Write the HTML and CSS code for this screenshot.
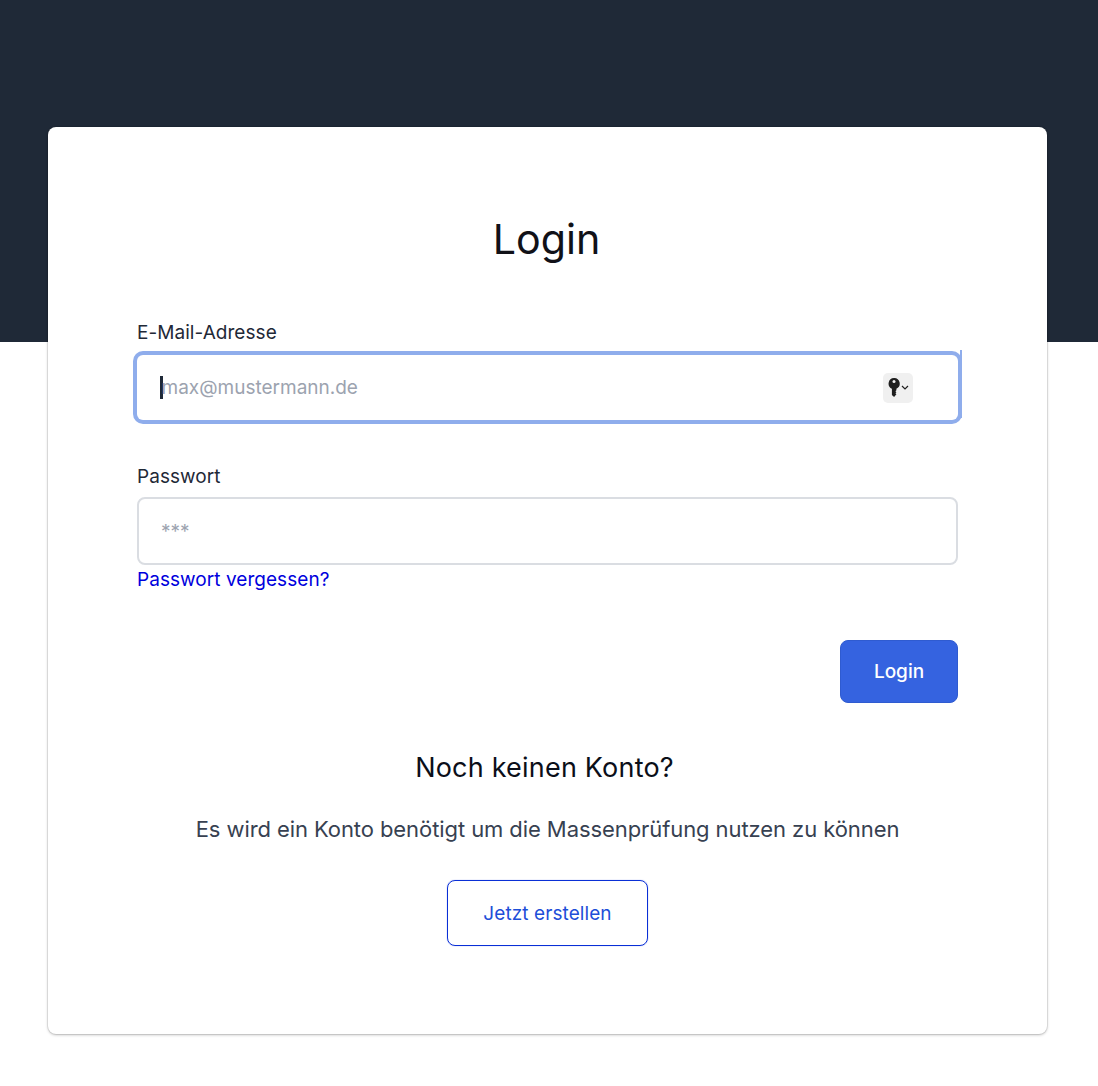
FILE: index.html
```html
<!DOCTYPE html>
<html lang="de">
<head>
<meta charset="utf-8">
<title>Login</title>
<link rel="stylesheet" href="styles.css">
</head>
<body>
<main class="page">
  <section class="card">
    <h1 class="title">Login</h1>
    <form class="form">
      <div class="field field-email">
        <label class="label" for="email">E-Mail-Adresse</label>
        <div class="input focused" id="email">
          <span class="caret"></span>
          <span class="placeholder">max@mustermann.de</span>
          <span class="key-badge">
            <svg class="key-icon" viewBox="0 0 12 20" width="12" height="20" aria-hidden="true">
              <path fill="#1f1f1f" d="M6 0a5.6 5.6 0 0 1 2.4 10.7v1.5l-1 1 1 1-1 1 1 1.1-2.3 2.7-2.2-2V10.700A5.600 5.600 0 0 1 6 0Z"/>
              <circle cx="6" cy="3.600" r="1.500" fill="#f0f0f0"/>
            </svg>
            <svg class="chev-icon" viewBox="0 0 8 5" width="8" height="5" aria-hidden="true">
              <path d="M1 1l3 3 3-3" fill="none" stroke="#1f1f1f" stroke-width="1.2"/>
            </svg>
          </span>
        </div>
      </div>
      <div class="field field-password">
        <label class="label" for="password">Passwort</label>
        <div class="input" id="password">
          <span class="placeholder">***</span>
        </div>
        <a class="forgot" href="#">Passwort vergessen?</a>
      </div>
      <div class="actions">
        <button class="btn-primary" type="button">Login</button>
      </div>
    </form>
    <div class="signup">
      <h2 class="signup-title">Noch keinen Konto?</h2>
      <p class="signup-text">Es wird ein Konto benötigt um die Massenprüfung nutzen zu können</p>
      <a class="btn-outline" href="#">Jetzt erstellen</a>
    </div>
  </section>
</main>
</body>
</html>
```
FILE: styles.css
```css
* { box-sizing: border-box; }

html, body { margin: 0; padding: 0; }

body {
  font-family: Inter, "Liberation Sans", sans-serif;
  background: #fff;
  color: #111827;
}

.page {
  min-height: 1086px;
  padding: 127px 51px 52px 48px;
  background: linear-gradient(#1f2937 342px, #fff 342px);
}

.card {
  height: 907px;
  padding: 84px 89px 0;
  background: #fff;
  border-radius: 8px;
  box-shadow: 0 0 0 1px rgba(0, 0, 0, 0.07), 0 1px 3px rgba(0, 0, 0, 0.25);
}

.title {
  margin: 0;
  padding-right: 2px;
  font-size: 41.2px;
  line-height: 56px;
  font-weight: 400;
  text-align: center;
  color: #111118;
}

.form { margin-top: 52px; }

.label {
  display: block;
  font-size: 19px;
  line-height: 28px;
  letter-spacing: 0.05px;
  color: #1f2937;
}

.field-password { margin-top: 43px; }

.input {
  display: flex;
  align-items: center;
  height: 68px;
  margin-top: 6px;
  padding: 0 22px;
  border: 2px solid #dadde2;
  border-radius: 8px;
  background: #fff;
  font-size: 19px;
}

.input.focused {
  position: relative;
  height: 65px;
  margin-top: 8px;
  padding: 0 45px 0 23px;
  border: 0;
  border-radius: 6px;
  box-shadow: 0 0 0 4px #8fadec;
}

.input.focused::after {
  content: "";
  position: absolute;
  top: -5px;
  bottom: 2px;
  right: -4px;
  width: 2px;
  background: #8fadec;
}

.placeholder { color: #9ca3af; }

.caret {
  flex: none;
  width: 2.5px;
  height: 23px;
  margin-right: -1px;
  background: #1f2937;
}

.key-badge {
  display: flex;
  align-items: center;
  justify-content: center;
  gap: 1px;
  width: 30px;
  height: 30px;
  margin-left: auto;
  border-radius: 5px;
  background: #f0f0f0;
}

.forgot {
  display: block;
  margin-top: 1px;
  font-size: 19px;
  line-height: 28px;
  letter-spacing: 0.05px;
  color: #0000dd;
  text-decoration: none;
}

.actions {
  display: flex;
  justify-content: flex-end;
  margin-top: 46px;
}

.btn-primary {
  width: 118px;
  height: 63px;
  border: 1px solid #2f5bd0;
  border-radius: 8px;
  background: #3563e0;
  color: #fff;
  font: 500 19px Inter, "Liberation Sans", sans-serif;
}

.signup {
  display: flex;
  flex-direction: column;
  align-items: center;
  margin-top: 47px;
}

.signup-title {
  margin: 0;
  padding-right: 6px;
  font-size: 27px;
  line-height: 36px;
  font-weight: 400;
  letter-spacing: 0.2px;
  color: #0b0f19;
}

.signup-text {
  margin: 29px 0 0;
  font-size: 22px;
  line-height: 28px;
  letter-spacing: -0.08px;
  color: #374151;
}

.btn-outline {
  display: flex;
  align-items: center;
  justify-content: center;
  width: 201px;
  height: 66px;
  margin-top: 37px;
  border: 1px solid #0a2fd6;
  border-radius: 8px;
  box-shadow: 0 0 1px rgba(10, 47, 214, 0.6);
  color: #1d4ed8;
  font-size: 19px;
  letter-spacing: 0.08px;
  text-decoration: none;
}
```
